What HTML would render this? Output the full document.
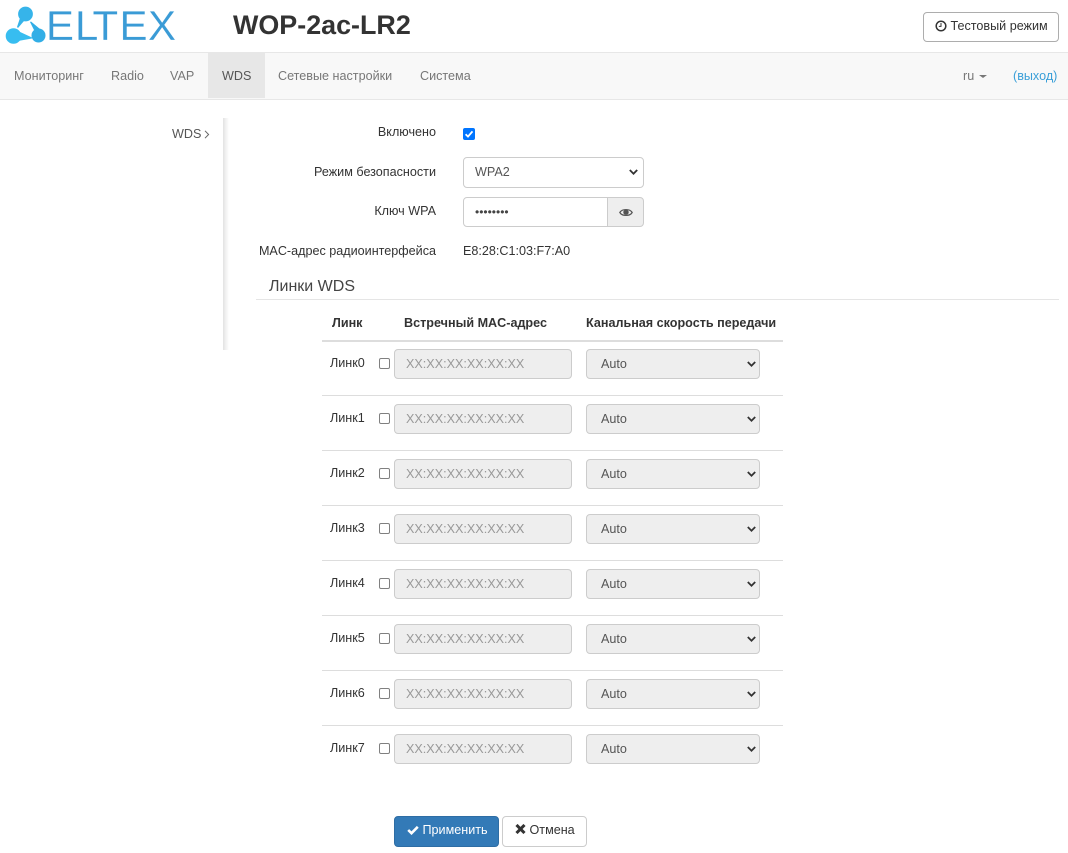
<!DOCTYPE html>
<html lang="ru"><head><meta charset="utf-8"><title>WOP-2ac-LR2</title>
<style>
*{box-sizing:border-box}
html,body{margin:0;padding:0;background:#fff}
body{width:1068px;height:853px;position:relative;overflow:hidden;font-family:"Liberation Sans",sans-serif;font-size:12.6px;color:#333}
.a{position:absolute;white-space:nowrap}
.nav{position:absolute;left:0;top:52px;width:1068px;height:48px;background:#f8f8f8;border-top:1px solid #e7e7e7;border-bottom:1px solid #e7e7e7}
.n{position:absolute;top:67.5px;color:#777;line-height:16px}
.r{text-align:right;width:300px;left:136px;line-height:16px}
.inp,.sel{position:absolute;border:1px solid #ccc;border-radius:4px;font-size:12.6px;line-height:18px;color:#555;white-space:nowrap}
.dis{background:#eee}
.chev{position:absolute;width:9px;height:6px}
.cb{position:absolute;width:11px;height:11px;left:379px;border:1px solid #808080;border-radius:2px;background:#fff}
.hr{position:absolute;left:322px;width:461px;height:1px;background:#ddd}
</style></head><body>

<svg class="a" style="left:0;top:0" width="190" height="50" viewBox="0 0 190 50">
<circle cx="25.5" cy="14" r="7.4" fill="#36b4ea"/>
<path d="M20 18 L24 21 L18 28 L17 27Z" fill="#36b4ea"/>
<circle cx="13.5" cy="36" r="7.8" fill="#37bdf0"/>
<path d="M18 31 L32 37.5 L32 38.5 L18 41Z" fill="#37bdf0"/>
<circle cx="38.5" cy="35.5" r="7" fill="#32aee6"/>
<path d="M34 30 L30 22 L31 21.5 L40 29Z" fill="#32aee6"/>
<text y="39.8" x="46 75 92.5 119.5 148" font-family="Liberation Sans" font-size="42" fill="#3a9bd6" stroke="#fff" stroke-width=".2">ELTEX</text>
</svg>

<div class="a" style="left:233px;top:10px;font-size:26.9px;font-weight:bold;line-height:30px;color:#333">WOP-2ac-LR2</div>

<div class="a" style="left:923px;top:12px;width:136px;height:30px;border:1px solid #adadad;border-radius:4px;line-height:26px;padding-left:11px;color:#333"><svg width="12" height="12" viewBox="0 0 12 12" style="vertical-align:-2px"><circle cx="6" cy="6" r="4.8" fill="none" stroke="#333" stroke-width="1.5"/><path d="M6 3v3.4H3.8" fill="none" stroke="#333" stroke-width="1"/></svg> Тестовый режим</div>

<div class="nav"></div>
<div class="a" style="left:208px;top:53px;width:57px;height:45px;background:#e7e7e7"></div>
<div class="a n" style="left:14px">Мониторинг</div>
<div class="a n" style="left:111px">Radio</div>
<div class="a n" style="left:170px">VAP</div>
<div class="a n" style="left:222px;color:#555">WDS</div>
<div class="a n" style="left:278px">Сетевые настройки</div>
<div class="a n" style="left:420px">Система</div>
<div class="a n" style="left:963px">ru</div>
<div class="a" style="left:979px;top:75px;width:0;height:0;border-left:4px solid transparent;border-right:4px solid transparent;border-top:3.5px solid #777"></div>
<div class="a n" style="left:1013px;color:#3a9fd8">(выход)</div>

<div class="a" style="left:223px;top:118px;width:6px;height:232px;background:linear-gradient(to right,#e2e2e2,#eeeeee 35%,#ffffff)"></div>
<div class="a" style="left:172px;top:126px;line-height:16px;color:#555">WDS</div>
<svg class="a" style="left:204px;top:130px" width="6" height="9" viewBox="0 0 6 9"><path d="M1 .8L4.6 4.5 1 8.2" fill="none" stroke="#666" stroke-width="1"/></svg>

<div class="a r" style="top:124px">Включено</div>
<div class="a" style="left:463px;top:127.5px;width:12px;height:12px;background:#0075ff;border-radius:2px"><svg width="12" height="12" viewBox="0 0 12 12" style="display:block"><path d="M2.6 6.2L5 8.6 9.5 3.4" fill="none" stroke="#fff" stroke-width="1.8"/></svg></div>

<div class="a r" style="top:164px">Режим безопасности</div>
<div class="sel" style="left:463px;top:157px;width:181px;height:31px;padding:5px 0 0 11px">WPA2</div>
<svg class="chev" style="left:629px;top:169px" viewBox="0 0 9 6"><path d="M.8 1L4.5 4.7 8.2 1" fill="none" stroke="#333" stroke-width="1.8"/></svg>

<div class="a r" style="top:203px">Ключ WPA</div>
<div class="inp" style="left:463px;top:197px;width:145px;height:30px;border-radius:4px 0 0 4px;padding:5px 0 0 11px;font-size:12px;color:#444">••••••••</div>
<div class="a" style="left:607px;top:197px;width:37px;height:30px;background:#eee;border:1px solid #ccc;border-radius:0 4px 4px 0"></div>
<svg class="a" style="left:619px;top:207px" width="14" height="11" viewBox="0 0 14 11"><path d="M.8 5.5C3.2 1.6 10.8 1.6 13.2 5.5 10.8 9.4 3.2 9.4.8 5.5Z" fill="none" stroke="#555" stroke-width="1.2"/><circle cx="7" cy="5.2" r="2.7" fill="#555"/></svg>

<div class="a r" style="top:243px">MAC-адрес радиоинтерфейса</div>
<div class="a" style="left:463px;top:243px;line-height:16px">E8:28:C1:03:F7:A0</div>

<div class="a" style="left:269px;top:278px;font-size:16px;line-height:18px;color:#444">Линки WDS</div>
<div class="a" style="left:256px;top:299px;width:803px;height:1px;background:#e5e5e5"></div>

<div class="a" style="left:332px;top:315px;font-weight:bold;line-height:16px">Линк</div>
<div class="a" style="left:404px;top:315px;font-weight:bold;line-height:16px">Встречный MAC-адрес</div>
<div class="a" style="left:586px;top:315px;font-weight:bold;line-height:16px">Канальная скорость передачи</div>
<div class="hr" style="top:340px;height:2px"></div>

<div class="a" style="left:330px;top:355px;line-height:16px">Линк0</div><div class="cb" style="top:358px"></div>
<div class="inp dis" style="left:394px;top:349px;width:178px;height:30px;padding:5px 0 0 11px;color:#999">XX:XX:XX:XX:XX:XX</div>
<div class="sel dis" style="left:586px;top:349px;width:174px;height:30px;padding:5px 0 0 14px">Auto</div>
<svg class="chev" style="left:747px;top:361px" viewBox="0 0 9 6"><path d="M.8 1L4.5 4.7 8.2 1" fill="none" stroke="#333" stroke-width="1.8"/></svg>

<div class="hr" style="top:395px"></div>
<div class="a" style="left:330px;top:410px;line-height:16px">Линк1</div><div class="cb" style="top:413px"></div>
<div class="inp dis" style="left:394px;top:404px;width:178px;height:30px;padding:5px 0 0 11px;color:#999">XX:XX:XX:XX:XX:XX</div>
<div class="sel dis" style="left:586px;top:404px;width:174px;height:30px;padding:5px 0 0 14px">Auto</div>
<svg class="chev" style="left:747px;top:416px" viewBox="0 0 9 6"><path d="M.8 1L4.5 4.7 8.2 1" fill="none" stroke="#333" stroke-width="1.8"/></svg>

<div class="hr" style="top:450px"></div>
<div class="a" style="left:330px;top:465px;line-height:16px">Линк2</div><div class="cb" style="top:468px"></div>
<div class="inp dis" style="left:394px;top:459px;width:178px;height:30px;padding:5px 0 0 11px;color:#999">XX:XX:XX:XX:XX:XX</div>
<div class="sel dis" style="left:586px;top:459px;width:174px;height:30px;padding:5px 0 0 14px">Auto</div>
<svg class="chev" style="left:747px;top:471px" viewBox="0 0 9 6"><path d="M.8 1L4.5 4.7 8.2 1" fill="none" stroke="#333" stroke-width="1.8"/></svg>

<div class="hr" style="top:505px"></div>
<div class="a" style="left:330px;top:520px;line-height:16px">Линк3</div><div class="cb" style="top:523px"></div>
<div class="inp dis" style="left:394px;top:514px;width:178px;height:30px;padding:5px 0 0 11px;color:#999">XX:XX:XX:XX:XX:XX</div>
<div class="sel dis" style="left:586px;top:514px;width:174px;height:30px;padding:5px 0 0 14px">Auto</div>
<svg class="chev" style="left:747px;top:526px" viewBox="0 0 9 6"><path d="M.8 1L4.5 4.7 8.2 1" fill="none" stroke="#333" stroke-width="1.8"/></svg>

<div class="hr" style="top:560px"></div>
<div class="a" style="left:330px;top:575px;line-height:16px">Линк4</div><div class="cb" style="top:578px"></div>
<div class="inp dis" style="left:394px;top:569px;width:178px;height:30px;padding:5px 0 0 11px;color:#999">XX:XX:XX:XX:XX:XX</div>
<div class="sel dis" style="left:586px;top:569px;width:174px;height:30px;padding:5px 0 0 14px">Auto</div>
<svg class="chev" style="left:747px;top:581px" viewBox="0 0 9 6"><path d="M.8 1L4.5 4.7 8.2 1" fill="none" stroke="#333" stroke-width="1.8"/></svg>

<div class="hr" style="top:615px"></div>
<div class="a" style="left:330px;top:630px;line-height:16px">Линк5</div><div class="cb" style="top:633px"></div>
<div class="inp dis" style="left:394px;top:624px;width:178px;height:30px;padding:5px 0 0 11px;color:#999">XX:XX:XX:XX:XX:XX</div>
<div class="sel dis" style="left:586px;top:624px;width:174px;height:30px;padding:5px 0 0 14px">Auto</div>
<svg class="chev" style="left:747px;top:636px" viewBox="0 0 9 6"><path d="M.8 1L4.5 4.7 8.2 1" fill="none" stroke="#333" stroke-width="1.8"/></svg>

<div class="hr" style="top:670px"></div>
<div class="a" style="left:330px;top:685px;line-height:16px">Линк6</div><div class="cb" style="top:688px"></div>
<div class="inp dis" style="left:394px;top:679px;width:178px;height:30px;padding:5px 0 0 11px;color:#999">XX:XX:XX:XX:XX:XX</div>
<div class="sel dis" style="left:586px;top:679px;width:174px;height:30px;padding:5px 0 0 14px">Auto</div>
<svg class="chev" style="left:747px;top:691px" viewBox="0 0 9 6"><path d="M.8 1L4.5 4.7 8.2 1" fill="none" stroke="#333" stroke-width="1.8"/></svg>

<div class="hr" style="top:725px"></div>
<div class="a" style="left:330px;top:740px;line-height:16px">Линк7</div><div class="cb" style="top:743px"></div>
<div class="inp dis" style="left:394px;top:734px;width:178px;height:30px;padding:5px 0 0 11px;color:#999">XX:XX:XX:XX:XX:XX</div>
<div class="sel dis" style="left:586px;top:734px;width:174px;height:30px;padding:5px 0 0 14px">Auto</div>
<svg class="chev" style="left:747px;top:746px" viewBox="0 0 9 6"><path d="M.8 1L4.5 4.7 8.2 1" fill="none" stroke="#333" stroke-width="1.8"/></svg>

<div class="a" style="left:394px;top:816px;width:105px;height:31px;background:#337ab7;border:1px solid #2e6da4;border-radius:4px;color:#fff;line-height:27px;padding-left:12px"><svg width="12" height="10" viewBox="0 0 12 10" style="vertical-align:-0.5px"><path d="M1.2 5L4.5 8.2 10.8 1.8" fill="none" stroke="#fff" stroke-width="2.6"/></svg> Применить</div>
<div class="a" style="left:502px;top:816px;width:85px;height:31px;background:#fff;border:1px solid #ccc;border-radius:4px;color:#333;line-height:27px;padding-left:12px"><svg width="11" height="10" viewBox="0 0 11 10" style="vertical-align:0"><path d="M1.5 1L9.5 9M9.5 1L1.5 9" fill="none" stroke="#333" stroke-width="3"/></svg> Отмена</div>

</body></html>
